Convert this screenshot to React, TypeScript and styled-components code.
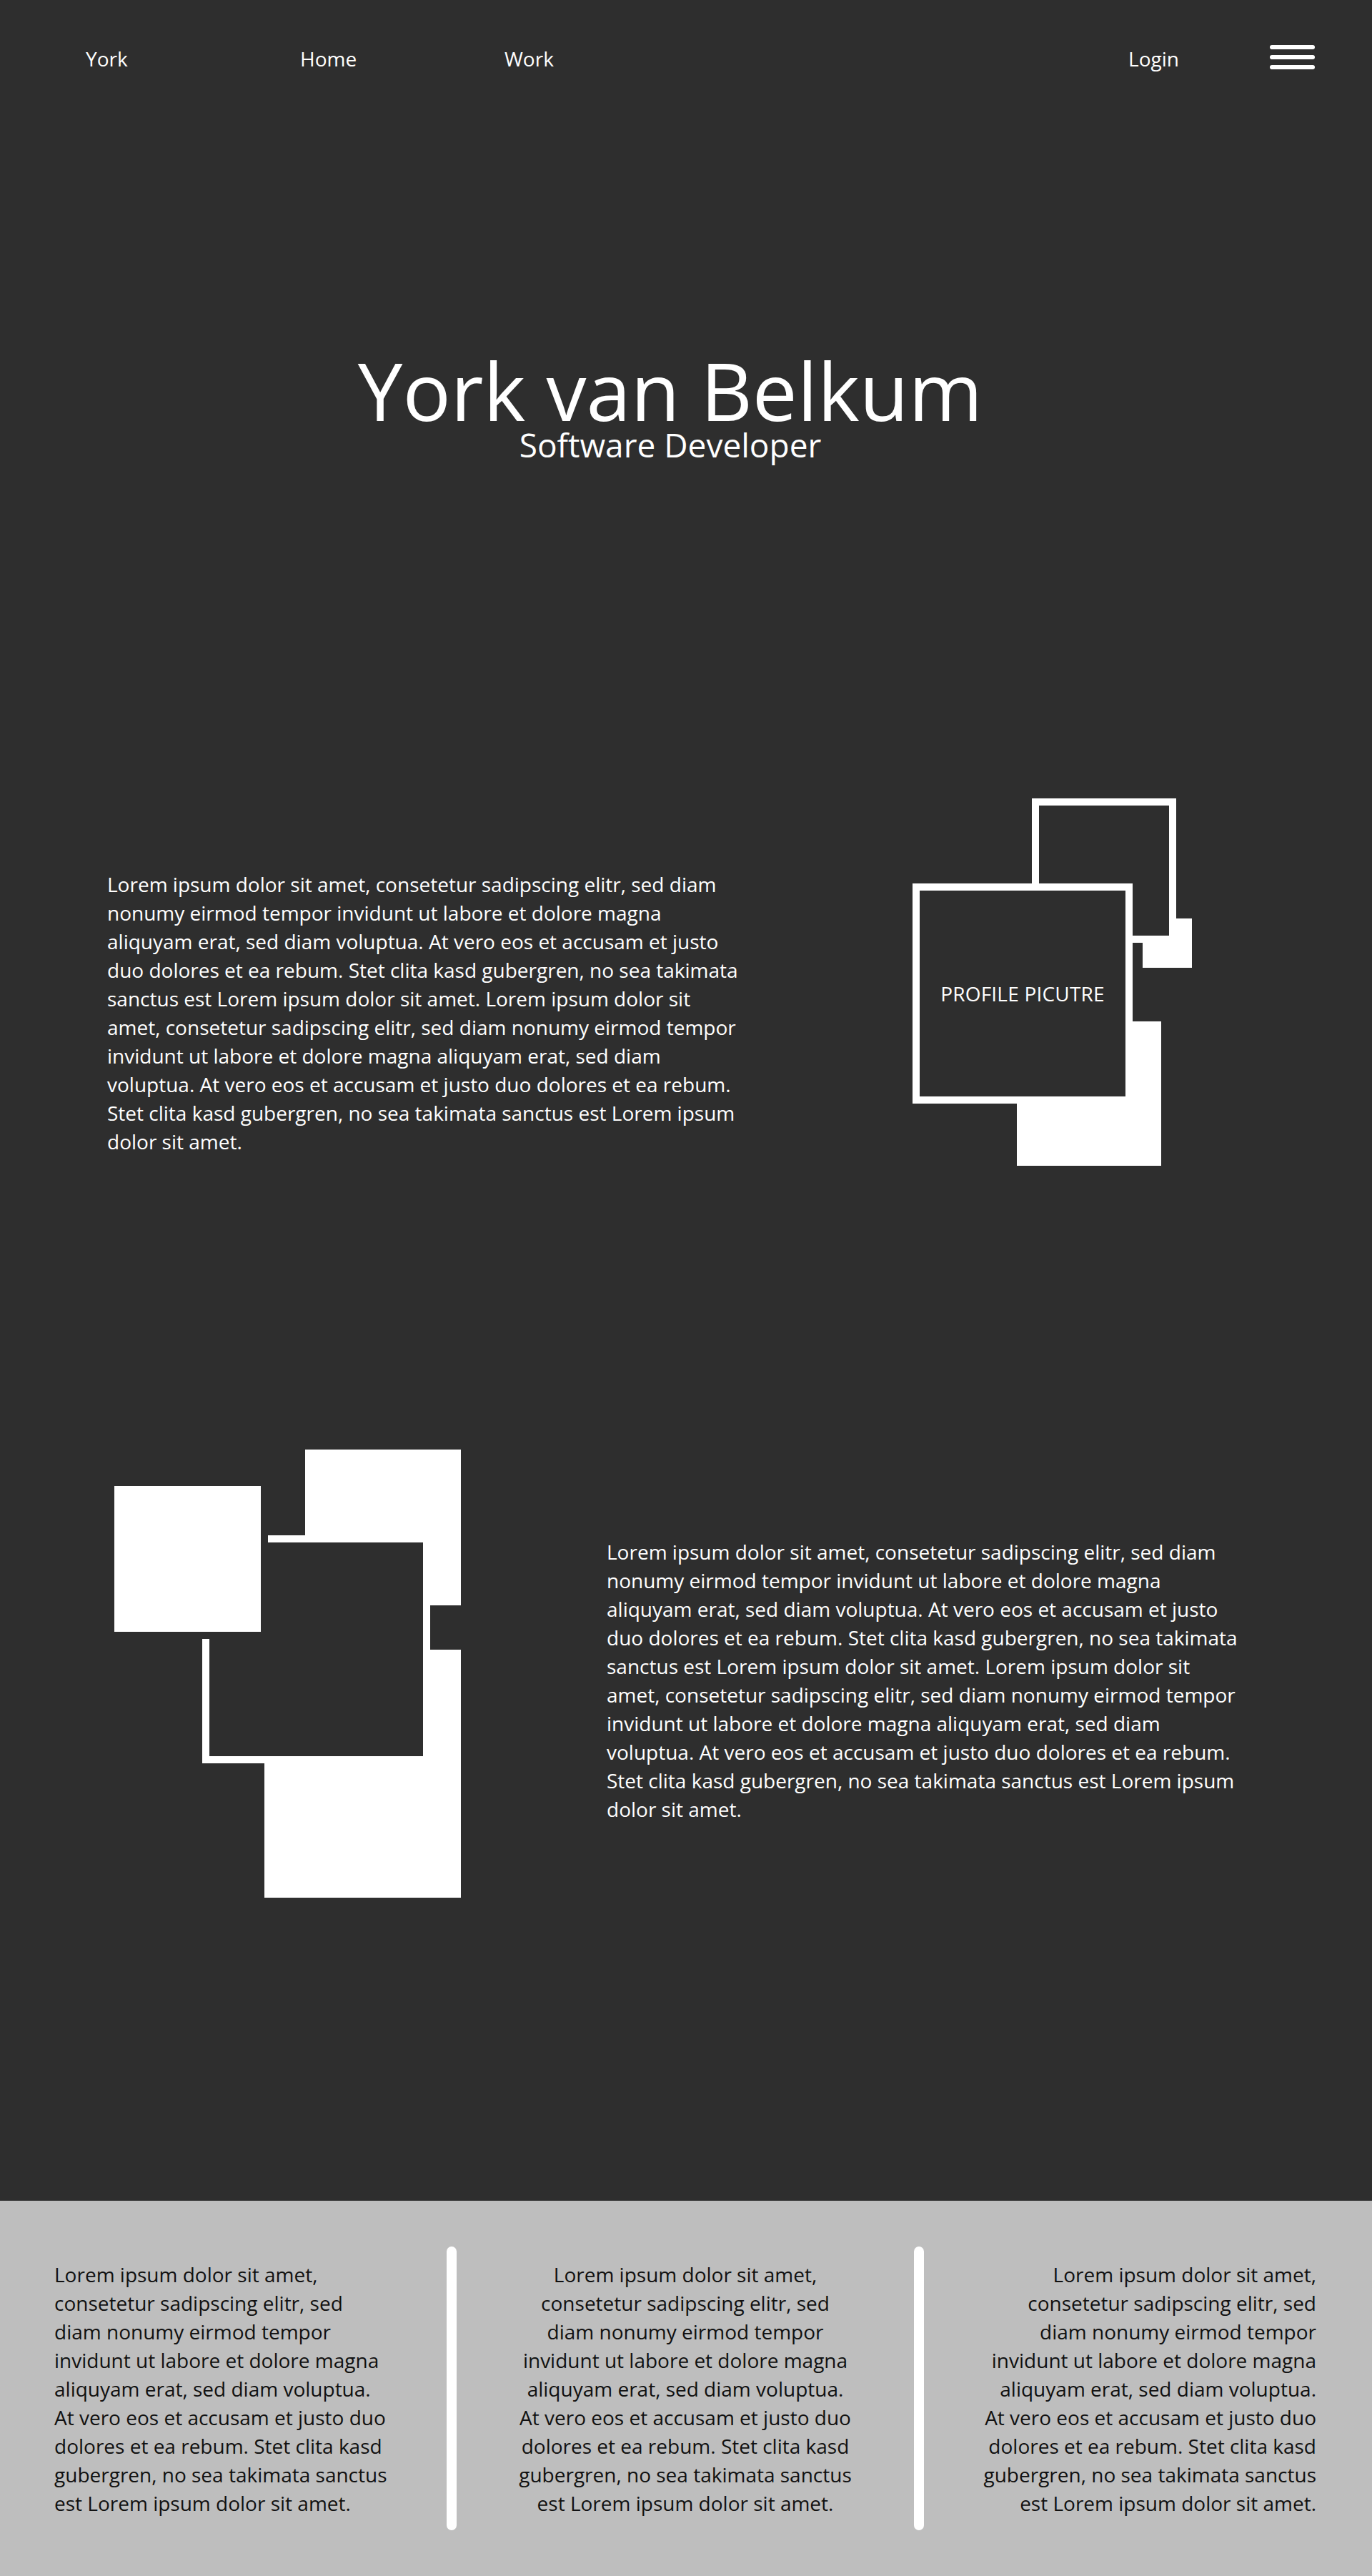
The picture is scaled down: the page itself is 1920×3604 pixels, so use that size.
import React from "react";
import styled, { createGlobalStyle } from "styled-components";

const GlobalStyle = createGlobalStyle`
  html, body { margin: 0; padding: 0; background: #2e2e2e; }
  body { font-family: "Open Sans", "Noto Sans", "Liberation Sans", sans-serif; color: #ffffff; }
  * { box-sizing: border-box; }
`;

const DARK = "#2e2e2e";

const Page = styled.div`
  width: 1920px;
  min-height: 3604px;
  background: ${DARK};
  display: flex;
  flex-direction: column;
`;

const NavBar = styled.nav`
  height: 164px;
  display: flex;
  align-items: center;
  padding: 0 80px 0 120px;
`;

const NavItem = styled.a<{ $w?: number }>`
  width: ${(p) => (p.$w ? `${p.$w}px` : "auto")};
  flex-shrink: 0;
  font-size: 28px;
  line-height: 40px;
  color: #ffffff;
  text-decoration: none;
`;

const Spacer = styled.div`
  flex: 1;
`;

const Hamburger = styled.button`
  margin-left: 127px;
  margin-top: -4px;
  width: 63px;
  height: 34px;
  padding: 0;
  border: 0;
  background: none;
  display: flex;
  flex-direction: column;
  justify-content: space-between;
  cursor: pointer;
`;

const Bar = styled.span`
  display: block;
  height: 6px;
  border-radius: 3px;
  background: #ffffff;
`;

const Hero = styled.header`
  padding: 328px 44px 0 0;
  display: flex;
  flex-direction: column;
  align-items: center;
`;

const Title = styled.h1`
  margin: 0;
  font-size: 112px;
  line-height: 108px;
  font-weight: 400;
`;

const Subtitle = styled.h2`
  margin: 2px 0 0;
  font-size: 46px;
  line-height: 40px;
  font-weight: 400;
`;

const Feature = styled.section<{ $mt: number; $gap: number }>`
  margin-top: ${(p) => p.$mt}px;
  padding-left: 150px;
  display: flex;
  align-items: flex-start;
  gap: ${(p) => p.$gap}px;
`;

const BodyText = styled.p<{ $mt: number }>`
  margin: ${(p) => p.$mt}px 0 0;
  width: 888px;
  flex-shrink: 0;
  font-size: 28px;
  line-height: 40px;
  color: #ffffff;
`;

const Canvas = styled.div<{ $w: number; $h: number }>`
  position: relative;
  flex-shrink: 0;
  width: ${(p) => p.$w}px;
  height: ${(p) => p.$h}px;
`;

const Block = styled.div<{ $x: number; $y: number; $w: number; $h: number; $z: number; $cut?: boolean }>`
  position: absolute;
  left: ${(p) => p.$x}px;
  top: ${(p) => p.$y}px;
  width: ${(p) => p.$w}px;
  height: ${(p) => p.$h}px;
  z-index: ${(p) => p.$z};
  background: #ffffff;
  border: ${(p) => (p.$cut ? `10px solid ${DARK}` : "none")};
`;

const Frame = styled.div<{ $x: number; $y: number; $size: number; $z: number }>`
  position: absolute;
  left: ${(p) => p.$x}px;
  top: ${(p) => p.$y}px;
  width: ${(p) => p.$size}px;
  height: ${(p) => p.$size}px;
  z-index: ${(p) => p.$z};
  border: 10px solid #ffffff;
  background: ${DARK};
  display: flex;
  align-items: center;
  justify-content: center;
`;

const FrameLabel = styled.span`
  font-size: 28px;
  line-height: 40px;
  color: #ffffff;
  letter-spacing: 0.2px;
`;

const Footer = styled.footer`
  margin-top: 424px;
  background: #bebebe;
  padding: 64px 78px 64px 76px;
  display: grid;
  grid-template-columns: 1fr 14px 640px 14px 1fr;
  align-items: center;
`;

const FooterText = styled.p<{ $align: "left" | "center" | "right" }>`
  margin: 0;
  max-width: 469px;
  font-size: 28px;
  line-height: 40px;
  color: #111111;
  text-align: ${(p) => p.$align};
  justify-self: ${(p) => (p.$align === "left" ? "start" : p.$align === "right" ? "end" : "center")};
`;

const Divider = styled.div`
  width: 14px;
  height: 397px;
  border-radius: 7px;
  background: #ffffff;
`;

const LONG =
  "Lorem ipsum dolor sit amet, consetetur sadipscing elitr, sed diam nonumy eirmod tempor invidunt ut labore et dolore magna aliquyam erat, sed diam voluptua. At vero eos et accusam et justo duo dolores et ea rebum. Stet clita kasd gubergren, no sea takimata sanctus est Lorem ipsum dolor sit amet. Lorem ipsum dolor sit amet, consetetur sadipscing elitr, sed diam nonumy eirmod tempor invidunt ut labore et dolore magna aliquyam erat, sed diam voluptua. At vero eos et accusam et justo duo dolores et ea rebum. Stet clita kasd gubergren, no sea takimata sanctus est Lorem ipsum dolor sit amet.";

const SHORT =
  "Lorem ipsum dolor sit amet, consetetur sadipscing elitr, sed diam nonumy eirmod tempor invidunt ut labore et dolore magna aliquyam erat, sed diam voluptua. At vero eos et accusam et justo duo dolores et ea rebum. Stet clita kasd gubergren, no sea takimata sanctus est Lorem ipsum dolor sit amet.";

export default function App() {
  return (
    <Page>
      <GlobalStyle />
      <NavBar>
        <NavItem $w={300} href="#">York</NavItem>
        <NavItem $w={286} href="#">Home</NavItem>
        <NavItem href="#">Work</NavItem>
        <Spacer />
        <NavItem href="#">Login</NavItem>
        <Hamburger aria-label="Menu">
          <Bar />
          <Bar />
          <Bar />
        </Hamburger>
      </NavBar>

      <Hero>
        <Title>York van Belkum</Title>
        <Subtitle>Software Developer</Subtitle>
      </Hero>

      <Feature $mt={475} $gap={239}>
        <BodyText $mt={100}>{LONG}</BodyText>
        <Canvas $w={391} $h={514}>
          <Block $x={322} $y={168} $w={69} $h={69} $z={1} />
          <Block $x={146} $y={312} $w={202} $h={202} $z={1} />
          <Frame $x={167} $y={0} $size={202} $z={2} />
          <Frame $x={0} $y={119} $size={308} $z={3}>
            <FrameLabel>PROFILE PICUTRE</FrameLabel>
          </Frame>
        </Canvas>
      </Feature>

      <Feature $mt={397} $gap={204}>
        <Canvas $w={495} $h={627}>
          <Block $x={277} $y={0} $w={218} $h={218} $z={1} />
          <Block $x={220} $y={280} $w={275} $h={347} $z={1} />
          <Frame $x={133} $y={120} $size={319} $z={2} />
          <Block $x={0} $y={41} $w={225} $h={224} $z={3} $cut />
        </Canvas>
        <BodyText $mt={123}>{LONG}</BodyText>
      </Feature>

      <Footer>
        <FooterText $align="left">{SHORT}</FooterText>
        <Divider />
        <FooterText $align="center">{SHORT}</FooterText>
        <Divider />
        <FooterText $align="right">{SHORT}</FooterText>
      </Footer>
    </Page>
  );
}
